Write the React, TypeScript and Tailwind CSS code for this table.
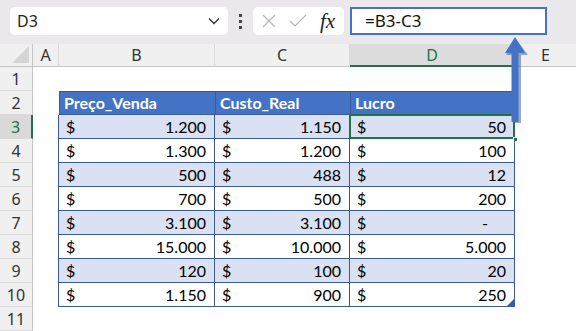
const ROWS: [string, string, string][] = [
  ["1.200", "1.150", "50"],
  ["1.300", "1.200", "100"],
  ["500", "488", "12"],
  ["700", "500", "200"],
  ["3.100", "3.100", "-"],
  ["15.000", "10.000", "5.000"],
  ["120", "100", "20"],
  ["1.150", "900", "250"],
];

const UI = "font-['Noto_Sans','Open_Sans',sans-serif]";
const CELL = "font-['Lato','Liberation_Sans',sans-serif]";

function RowHeader({ n, active }: { n: number; active?: boolean }) {
  return (
    <div
      className={`flex h-full w-[33px] shrink-0 items-center justify-center border-b border-b-[#dadada] text-[16px] ${UI} ${
        active
          ? "border-r-2 border-r-[#217346] bg-[#d9d9d9] text-[#217346]"
          : "border-r border-r-[#c6c6c6] bg-[#f0f0f0] text-[#333]"
      }`}
    >
      {n}
    </div>
  );
}

function Money({ value, width, shaded }: { value: string; width: string; shaded: boolean }) {
  return (
    <div
      className={`flex h-full items-center justify-between border-b border-r border-[#3a5a9c] pl-[7px] text-[16px] text-black ${CELL} ${width} ${
        shaded ? "bg-[#d9e1f2]" : "bg-white"
      } ${value === "-" ? "pr-[26px]" : "pr-[8px]"}`}
    >
      <span>$</span>
      <span>{value}</span>
    </div>
  );
}

export default function App() {
  return (
    <div className="relative h-[331px] w-[576px] overflow-hidden bg-white">
      {/* toolbar */}
      <div className="flex h-[44px] items-start bg-[#ebe8ec] pt-[7px]">
        <div
          className={`ml-[10px] flex h-[28px] w-[218px] items-center justify-between rounded-[5px] bg-white pl-[7px] pr-[8px] text-[16px] text-[#222] ${UI}`}
        >
          <span>D3</span>
          <svg width="12" height="8" viewBox="0 0 12 8" fill="none">
            <path d="M1 1.5 6 6.5 11 1.5" stroke="#333" strokeWidth="1.4" />
          </svg>
        </div>
        <div className="ml-[11px] flex h-[28px] flex-col items-center justify-center gap-[3px]">
          <span className="h-[3px] w-[3px] bg-[#444]" />
          <span className="h-[3px] w-[3px] bg-[#444]" />
          <span className="h-[3px] w-[3px] bg-[#444]" />
        </div>
        <div className="ml-[11px] flex h-[28px] w-[91px] items-center rounded-[5px] bg-white pl-[8px]">
          <svg width="16" height="16" viewBox="0 0 16 16" fill="none">
            <path d="M2 2 14 14M14 2 2 14" stroke="#b5b5b5" strokeWidth="1.2" />
          </svg>
          <svg className="ml-[12px]" width="18" height="14" viewBox="0 0 18 14" fill="none">
            <path d="M1 7 6 12 17 1" stroke="#b5b5b5" strokeWidth="1.2" />
          </svg>
          <span className="ml-[13px] font-['Liberation_Serif',serif] text-[21px] italic leading-none text-[#222]">
            fx
          </span>
        </div>
        <div
          className={`ml-[6px] flex h-[28px] w-[197px] items-center border-2 border-[#4472c4] bg-white pl-[13px] text-[17px] text-[#111] ${UI}`}
        >
          =B3-C3
        </div>
      </div>

      {/* column headers */}
      <div className={`flex h-[23px] bg-[#f0f0f0] text-[16px] text-[#333] ${UI}`}>
        <div className="relative w-[33px] border-b border-r border-[#c6c6c6]">
          <svg className="absolute bottom-[3px] right-[3px]" width="17" height="17" viewBox="0 0 17 17">
            <path d="M17 0 17 17 0 17Z" fill="#d4d4d4" />
          </svg>
        </div>
        <div className="flex w-[26px] items-center justify-center border-b border-r border-[#dadada] border-b-[#c6c6c6]">
          A
        </div>
        <div className="flex w-[156px] items-center justify-center border-b border-r border-[#dadada] border-b-[#c6c6c6]">
          B
        </div>
        <div className="flex w-[135px] items-center justify-center border-b border-r border-[#dadada] border-b-[#c6c6c6]">
          C
        </div>
        <div className="flex w-[165px] items-center justify-center border-b-2 border-r border-[#dadada] border-b-[#217346] bg-[#dcdcdc] text-[#217346]">
          D
        </div>
        <div className="flex flex-1 items-center justify-center border-b border-[#c6c6c6]">
          E
        </div>
      </div>

      {/* row 1 */}
      <div className="flex h-[24px]">
        <RowHeader n={1} />
      </div>

      {/* row 2: table header */}
      <div className="flex h-[24px]">
        <RowHeader n={2} />
        <div className="w-[26px]" />
        <div className={`flex text-[16px] font-bold text-white ${CELL}`}>
          <div className="flex h-[24px] w-[156px] items-center border border-r-0 border-[#3a5a9c] bg-[#4472c4] pl-[4px]">
            Preço_Venda
          </div>
          <div className="flex h-[24px] w-[135px] items-center border-y border-l border-[#3a5a9c] bg-[#4472c4] pl-[4px]">
            Custo_Real
          </div>
          <div className="flex h-[24px] w-[165px] items-center border border-[#3a5a9c] bg-[#4472c4] pl-[4px]">
            Lucro
          </div>
        </div>
      </div>

      {/* rows 3 - 10 */}
      {ROWS.map((r, i) => {
        const shaded = i % 2 === 0;
        return (
          <div key={i} className="flex h-[24px]">
            <RowHeader n={i + 3} active={i === 0} />
            <div className="w-[26px] border-r border-[#3a5a9c]" />
            <Money value={r[0]} width="w-[156px]" shaded={shaded} />
            <Money value={r[1]} width="w-[135px]" shaded={shaded} />
            <div className="relative">
              <Money value={r[2]} width="w-[165px]" shaded={shaded} />
              {i === 0 && (
                <>
                  <div className="absolute -left-[1px] -top-[1px] h-[25px] w-[166px] border-2 border-[#217346]" />
                  <div className="absolute -bottom-[3px] -right-[3px] h-[5px] w-[5px] border border-white bg-[#217346]" />
                </>
              )}
              {i === ROWS.length - 1 && (
                <svg className="absolute bottom-[1px] right-[1px]" width="7" height="7" viewBox="0 0 7 7">
                  <path d="M7 0 7 7 0 7Z" fill="#3a5aa8" />
                </svg>
              )}
            </div>
          </div>
        );
      })}

      {/* row 11 */}
      <div className="flex h-[24px]">
        <RowHeader n={11} />
      </div>

      {/* arrow */}
      <svg className="absolute left-[500px] top-[33px]" width="34" height="95" viewBox="0 0 34 95">
        <path
          d="M15 5 L5 21 L12 21 L12 89 L20 89 L20 21 L27 21 Z"
          fill="#2f5597"
          opacity="0.5"
          transform="translate(1 1)"
        />
        <path d="M15 4 L5 20 L11.5 20 L11.5 89 L18.5 89 L18.5 20 L25 20 Z" fill="#4472c4" />
      </svg>
    </div>
  );
}
